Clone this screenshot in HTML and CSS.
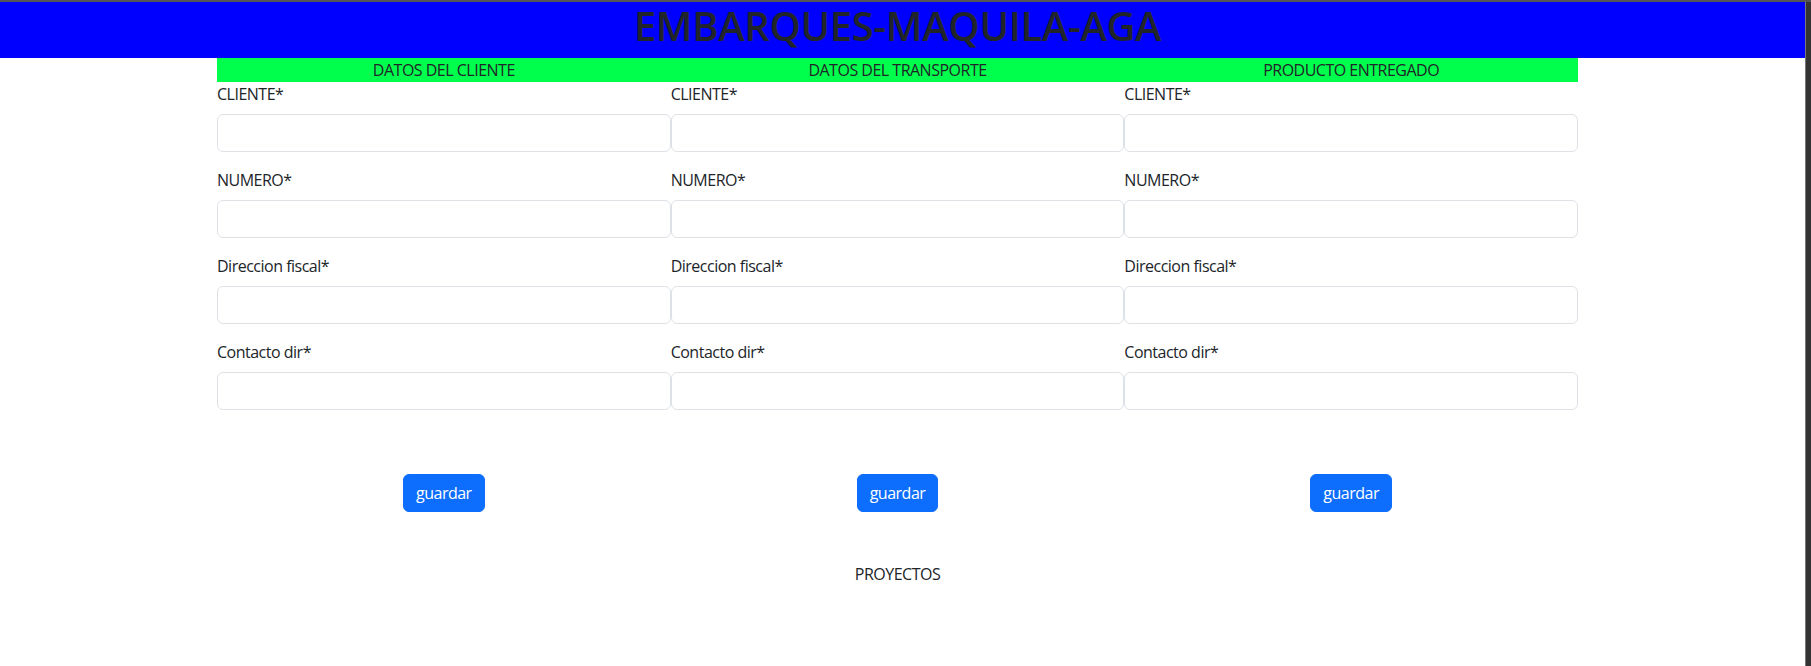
FILE: index.html
```html
<!DOCTYPE html>
<html lang="es">
<head>
<meta charset="utf-8">
<title>EMBARQUES-MAQUILA-AGA</title>
<link rel="stylesheet" href="styles.css">
</head>
<body>
<div class="frame">
  <div class="page">
    <header class="banner">
      <h1 class="title">EMBARQUES-MAQUILA-AGA</h1>
    </header>
    <main class="container">
      <div class="section-bar">
        <div class="section-title">DATOS DEL CLIENTE</div>
        <div class="section-title">DATOS DEL TRANSPORTE</div>
        <div class="section-title">PRODUCTO ENTREGADO</div>
      </div>
      <div class="columns">
        <form class="col">
          <label class="field-label">CLIENTE*</label>
          <input class="field-input" type="text">
          <label class="field-label">NUMERO*</label>
          <input class="field-input" type="text">
          <label class="field-label">Direccion fiscal*</label>
          <input class="field-input" type="text">
          <label class="field-label">Contacto dir*</label>
          <input class="field-input" type="text">
          <div class="actions"><button class="btn" type="button">guardar</button></div>
        </form>
        <form class="col">
          <label class="field-label">CLIENTE*</label>
          <input class="field-input" type="text">
          <label class="field-label">NUMERO*</label>
          <input class="field-input" type="text">
          <label class="field-label">Direccion fiscal*</label>
          <input class="field-input" type="text">
          <label class="field-label">Contacto dir*</label>
          <input class="field-input" type="text">
          <div class="actions"><button class="btn" type="button">guardar</button></div>
        </form>
        <form class="col">
          <label class="field-label">CLIENTE*</label>
          <input class="field-input" type="text">
          <label class="field-label">NUMERO*</label>
          <input class="field-input" type="text">
          <label class="field-label">Direccion fiscal*</label>
          <input class="field-input" type="text">
          <label class="field-label">Contacto dir*</label>
          <input class="field-input" type="text">
          <div class="actions"><button class="btn" type="button">guardar</button></div>
        </form>
      </div>
      <p class="footer-link">PROYECTOS</p>
    </main>
  </div>
  <div class="edge"></div>
</div>
</body>
</html>
```
FILE: styles.css
```css
html, body {
  margin: 0;
  padding: 0;
  height: 100%;
}
body {
  font-family: "Open Sans", "Noto Sans", sans-serif;
  font-size: 16px;
  line-height: 1.5;
  letter-spacing: -0.5px;
  color: #212529;
  background: #ffffff;
}
.frame {
  display: flex;
  min-height: 100%;
  border-top: 2px solid #555555;
  box-sizing: border-box;
}
.page {
  flex: 1;
  min-width: 0;
  background: #ffffff;
}
.edge {
  width: 6px;
  background: #333333;
  border-left: 1px solid #777777;
  box-sizing: border-box;
}
.banner {
  background: #0000ff;
  padding-bottom: 8px;
  padding-right: 10px;
}
.title {
  margin: 0;
  font-size: 40px;
  font-weight: 600;
  letter-spacing: -0.4px;
  line-height: 1.2;
  text-align: center;
  color: #212529;
}
.container {
  width: 1361px;
  margin: 0 auto;
  position: relative;
  left: -5px;
}
.section-bar {
  display: grid;
  grid-template-columns: repeat(3, 1fr);
  background: #00ff4c;
}
.section-title {
  text-align: center;
  line-height: 24px;
}
.columns {
  display: grid;
  grid-template-columns: repeat(3, 1fr);
}
.col {
  display: flex;
  flex-direction: column;
  margin: 0;
}
.field-label {
  display: block;
  margin-bottom: 8px;
  line-height: 24px;
}
.field-input {
  display: block;
  box-sizing: border-box;
  width: 100%;
  height: 38px;
  margin: 0 0 16px;
  padding: 6px 12px;
  font: inherit;
  border: 1px solid #dee2e6;
  border-radius: 6px;
  background: #ffffff;
}
.actions {
  margin-top: 48px;
  text-align: center;
}
.btn {
  font: inherit;
  letter-spacing: -0.5px;
  line-height: 24px;
  padding: 6px 12px;
  color: #ffffff;
  background: #0d6efd;
  border: 1px solid #0d6efd;
  border-radius: 6px;
}
.footer-link {
  margin: 50px 0 0;
  text-align: center;
}
```
